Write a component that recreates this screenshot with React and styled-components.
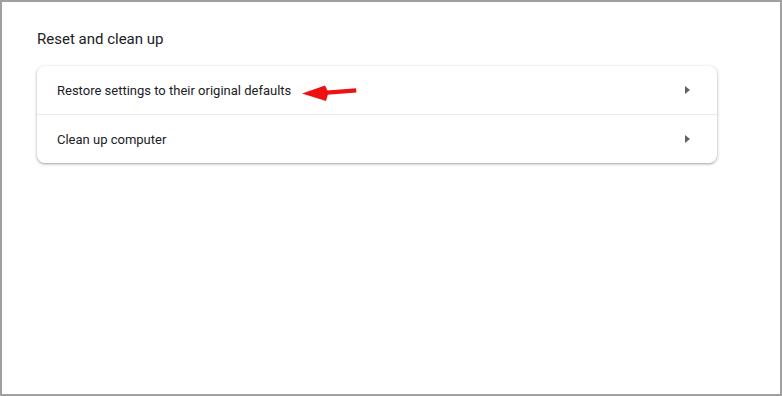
import React from "react";
import styled, { createGlobalStyle } from "styled-components";

const GlobalStyle = createGlobalStyle`
  html, body {
    margin: 0;
    padding: 0;
    background: #ffffff;
  }
  body {
    font-family: Roboto, "Liberation Sans", Arial, sans-serif;
  }
`;

const Frame = styled.div`
  box-sizing: border-box;
  width: 782px;
  height: 396px;
  border: 2px solid #a0a0a0;
  background: #ffffff;
  padding: 27px 0 0 35px;
`;

const SectionTitle = styled.h2`
  margin: 0 0 17px;
  font-size: 15px;
  font-weight: 400;
  line-height: 20px;
  color: #202124;
`;

const Card = styled.div`
  width: 680px;
  background: #ffffff;
  border-radius: 8px;
  box-shadow: 0 1px 2px rgba(60, 64, 67, 0.3), 0 1px 3px 1px rgba(60, 64, 67, 0.15);
`;

const Row = styled.div`
  display: flex;
  align-items: center;
  justify-content: space-between;
  height: 48px;
  padding: 0 27px 0 20px;
  border-top: ${(p) => (p.$first ? "none" : "1px solid #e8eaed")};
  font-size: 13px;
  color: #202124;
  cursor: pointer;
`;

const Label = styled.span`
  display: flex;
  align-items: center;
  gap: 10px;
`;

const Caret = styled.span`
  width: 0;
  height: 0;
  border-top: 4px solid transparent;
  border-bottom: 4px solid transparent;
  border-left: 5px solid #5f6368;
`;

const RedArrow = () => (
  <svg width="58" height="20" viewBox="0 0 58 20" style={{ marginTop: 3 }}>
    <path d="M26 8.6 L55 6.2 L55.4 10.4 L26.4 12.8 Z" fill="#ee1111" />
    <path d="M1 11.5 L24 3.5 L27.5 10.6 L25 19 Z" fill="#ee1111" />
  </svg>
);

const items = [
  { label: "Restore settings to their original defaults", marked: true },
  { label: "Clean up computer" },
];

export default function App() {
  return (
    <>
      <GlobalStyle />
      <Frame>
        <SectionTitle>Reset and clean up</SectionTitle>
        <Card>
          {items.map((el, idx) => (
            <Row key={idx} $first={idx === 0}>
              <Label>
                {el.label}
                {el.marked && <RedArrow />}
              </Label>
              <Caret />
            </Row>
          ))}
        </Card>
      </Frame>
    </>
  );
}
